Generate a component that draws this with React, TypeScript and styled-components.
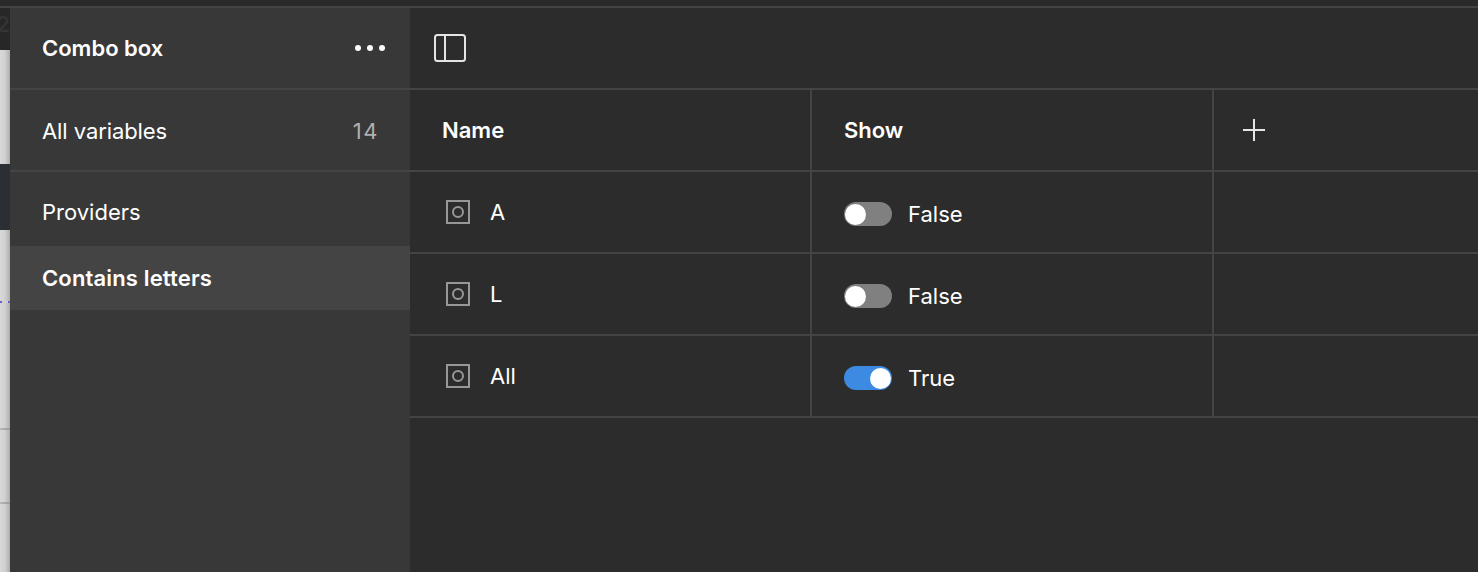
import React from 'react';
import styled, { createGlobalStyle } from 'styled-components';

const GlobalStyle = createGlobalStyle`
  html, body {
    margin: 0;
    height: 100%;
    overflow: hidden;
    background: #2c2c2c;
  }
  * {
    box-sizing: border-box;
  }
`;

const Page = styled.div`
  width: 1478px;
  height: 572px;
  display: flex;
  flex-direction: column;
  background: #2c2c2c;
  color: #fff;
  font-family: Inter, "Liberation Sans", sans-serif;
  font-size: 22px;
  overflow: hidden;
`;

const TopBar = styled.div`
  height: 8px;
  flex: none;
  background: #2a2a2a;
  border-bottom: 2px solid #444;
`;

const Body = styled.div`
  flex: 1;
  display: flex;
  min-height: 0;
`;

/* the bit of the canvas that peeks out behind the modal */
const Backdrop = styled.div`
  width: 10px;
  flex: none;
  display: flex;
  flex-direction: column;
  overflow: hidden;
`;

const Band = styled.div<{ $h: number; $tone: 'dark' | 'slate' | 'light' | 'rule' }>`
  height: ${p => p.$h}px;
  flex: none;
  overflow: hidden;
  background: ${p =>
    p.$tone === 'dark'
      ? '#272727'
      : p.$tone === 'slate'
        ? '#2b2f34'
        : p.$tone === 'rule'
          ? 'linear-gradient(to right, #b8b8b8, #9a9a9a)'
          : 'linear-gradient(to right, #d9d9d9 0%, #d0d0d0 50%, #adadad 100%)'};
`;

const FaintDigits = styled.div`
  margin: 3px 0 0 -13px;
  color: #343434;
  font-size: 22px;
  font-weight: 600;
  white-space: nowrap;
`;

const Dash = styled.div`
  height: 2px;
  flex: none;
  background: linear-gradient(to right, #7a55d8 0 2px, #d0d0d0 2px 8px, #7a55d8 8px 10px);
`;

const Sidebar = styled.aside`
  width: 400px;
  flex: none;
  background: #383838;
  display: flex;
  flex-direction: column;
`;

const SidebarHeader = styled.div`
  height: 82px;
  flex: none;
  display: flex;
  align-items: center;
  justify-content: space-between;
  padding: 0 25px 0 32px;
  border-bottom: 2px solid #444;
  font-weight: 600;
`;

const Dots = styled.svg`
  width: 30px;
  height: 6px;
  fill: #fff;
`;

const AllRow = styled.div`
  height: 82px;
  flex: none;
  display: flex;
  align-items: center;
  justify-content: space-between;
  padding: 2px 32px 0 32px;
  border-bottom: 2px solid #444;
  letter-spacing: -0.08px;
`;

const Count = styled.span`
  color: #b0b0b0;
  letter-spacing: 1.5px;
  margin-right: -1px;
`;

const Collection = styled.div<{ $active?: boolean }>`
  height: ${p => (p.$active ? 64 : 74)}px;
  flex: none;
  display: flex;
  align-items: center;
  padding: ${p => (p.$active ? '0 32px' : '6px 32px 0')};
  background: ${p => (p.$active ? '#444' : 'transparent')};
  font-weight: ${p => (p.$active ? 600 : 400)};
  letter-spacing: ${p => (p.$active ? '0.15px' : '0')};
`;

const Main = styled.main`
  flex: 1;
  min-width: 0;
  display: flex;
  flex-direction: column;
`;

const Toolbar = styled.div`
  height: 82px;
  flex: none;
  display: flex;
  align-items: center;
  padding: 0 0 0 24px;
  border-bottom: 2px solid #444;
`;

const PanelIcon = styled.svg`
  width: 32px;
  height: 28px;
  fill: none;
  stroke: #e4e4e4;
  stroke-width: 2;
`;

const Row = styled.div`
  height: 82px;
  flex: none;
  display: grid;
  grid-template-columns: 402px 402px 1fr;
  border-bottom: 2px solid #444;
`;

const Cell = styled.div<{ $last?: boolean }>`
  display: flex;
  align-items: center;
  padding: 0 0 0 32px;
  border-right: ${p => (p.$last ? 'none' : '2px solid #444')};
`;

const HeadLabel = styled.span`
  font-weight: 600;
`;

const PlusIcon = styled.svg`
  width: 22px;
  height: 22px;
  stroke: #e6e6e6;
  stroke-width: 2;
  margin-left: -3px;
`;

const NameCell = styled(Cell)`
  padding-left: 36px;
  gap: 20px;
`;

const VariantIcon = styled.svg`
  width: 24px;
  height: 24px;
  flex: none;
  fill: none;
  stroke: #979797;
  stroke-width: 2;
`;

const ValueCell = styled(Cell)`
  padding-top: 4px;
  gap: 16px;
`;

const Toggle = styled.span<{ $on: boolean }>`
  width: 48px;
  height: 24px;
  flex: none;
  display: flex;
  align-items: center;
  justify-content: ${p => (p.$on ? 'flex-end' : 'flex-start')};
  padding: 0 1px;
  border-radius: 12px;
  background: ${p => (p.$on ? '#3d8ae2' : '#808080')};

  &::after {
    content: '';
    width: 21px;
    height: 21px;
    border-radius: 50%;
    background: #fff;
  }
`;

const variants = [
  { name: 'A', on: false },
  { name: 'L', on: false },
  { name: 'All', on: true },
];

const App: React.FC = () => {
  return (
    <Page>
      <GlobalStyle />
      <TopBar />
      <Body>
        <Backdrop>
          <Band $h={42} $tone="dark">
            <FaintDigits>12</FaintDigits>
          </Band>
          <Band $h={114} $tone="light" />
          <Band $h={66} $tone="slate" />
          <Band $h={71} $tone="light" />
          <Dash />
          <Band $h={125} $tone="light" />
          <Band $h={2} $tone="rule" />
          <Band $h={72} $tone="light" />
          <Band $h={2} $tone="rule" />
          <Band $h={70} $tone="light" />
        </Backdrop>
        <Sidebar>
          <SidebarHeader>
            <span>Combo box</span>
            <Dots viewBox="0 0 30 6">
              <circle cx="3" cy="3" r="3" />
              <circle cx="15" cy="3" r="3" />
              <circle cx="27" cy="3" r="3" />
            </Dots>
          </SidebarHeader>
          <AllRow>
            <span>All variables</span>
            <Count>14</Count>
          </AllRow>
          <Collection>Providers</Collection>
          <Collection $active>Contains letters</Collection>
        </Sidebar>
        <Main>
          <Toolbar>
            <PanelIcon viewBox="0 0 32 28">
              <rect x="1" y="1" width="30" height="26" rx="2.5" />
              <path d="M11 1v26" />
            </PanelIcon>
          </Toolbar>
          <Row>
            <Cell>
              <HeadLabel>Name</HeadLabel>
            </Cell>
            <Cell>
              <HeadLabel>Show</HeadLabel>
            </Cell>
            <Cell $last>
              <PlusIcon viewBox="0 0 22 22">
                <path d="M11 0v22M0 11h22" />
              </PlusIcon>
            </Cell>
          </Row>
          {variants.map(v => (
            <Row key={v.name}>
              <NameCell>
                <VariantIcon viewBox="0 0 24 24">
                  <rect x="1" y="1" width="22" height="22" />
                  <circle cx="12" cy="12" r="5" />
                </VariantIcon>
                <span>{v.name}</span>
              </NameCell>
              <ValueCell>
                <Toggle $on={v.on} />
                <span>{v.on ? 'True' : 'False'}</span>
              </ValueCell>
              <Cell $last />
            </Row>
          ))}
        </Main>
      </Body>
    </Page>
  );
};

export default App;
